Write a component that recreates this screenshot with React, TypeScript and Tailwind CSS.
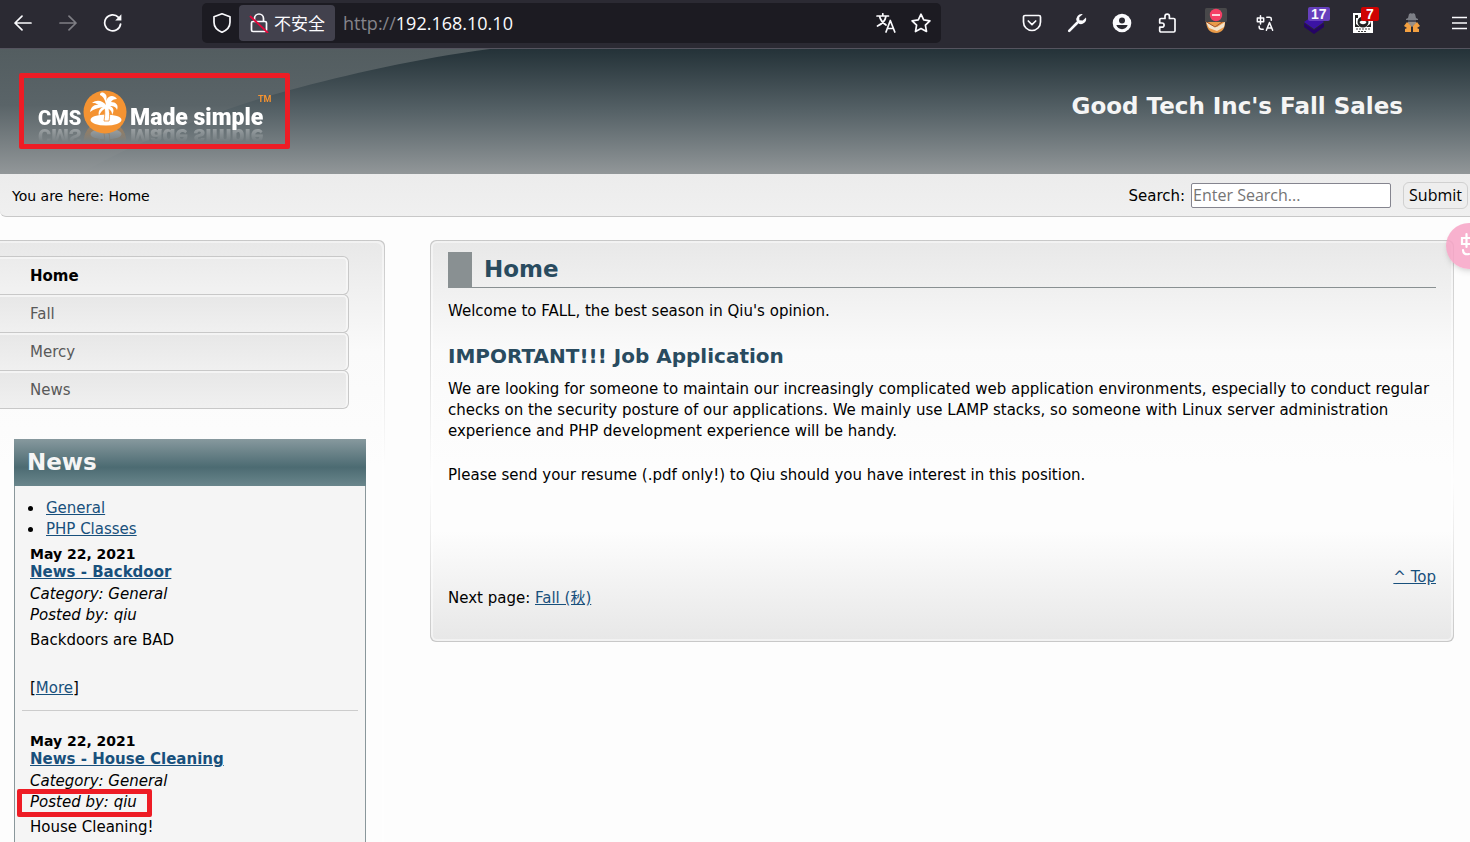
import React from "react";

const link = "text-[#18507c] underline";

function Glyph({ children, size = 20, className = "" }: { children: React.ReactNode; size?: number; className?: string }) {
  return (
    <svg width={size} height={size} viewBox="0 0 20 20" fill="none" stroke="#fbfbfe" strokeWidth="1.7" strokeLinecap="round" strokeLinejoin="round" className={"shrink-0 " + className} aria-hidden="true">
      {children}
    </svg>
  );
}

function Tool({ label, children }: { label: string; children: React.ReactNode }) {
  return (
    <button aria-label={label} className="relative flex size-8 shrink-0 items-center justify-center">
      {children}
    </button>
  );
}

function Toolbar() {
  return (
    <header className="flex h-[49px] shrink-0 items-center border-b border-[#55545f] bg-[#2b2a33] pb-0.5 text-[#fbfbfe]">
      <div className="flex gap-[13px] pl-[7px]">
        <Tool label="Back"><Glyph><path d="M18 10H2M9 3.200 2 10l7 6.800" /></Glyph></Tool>
        <Tool label="Forward"><Glyph className="opacity-40"><path d="M2 10h16M11 3.200 18 10l-7 6.800" /></Glyph></Tool>
        <Tool label="Reload">
          <Glyph>
            <path d="M17.600 11a8 8 0 1 1-2.100-6.700" />
            <path d="M18.400 1.300v6.200h-6.200z" fill="#fbfbfe" stroke="none" />
          </Glyph>
        </Tool>
      </div>
      <div className="ml-[73px] flex h-10 w-[739px] items-center rounded-[5px] bg-[#1c1b22] pr-1 pl-1">
        <Tool label="Tracking protection">
          <Glyph><path d="M10 .8 18 3.700v5.600c0 4.400-3.200 8-8 10-4.800-2-8-5.600-8-10V3.700z" /></Glyph>
        </Tool>
        <button className="ml-px flex h-9 items-center gap-[5px] rounded bg-[#42414d] pr-[10px] pl-[10px] font-['Noto_Sans_CJK_SC',sans-serif] text-[17px]">
          <Glyph>
            <path d="M5.500 8.500V5.500a4.500 4.500 0 0 1 9 0v3M4 8.500h12a1.500 1.500 0 0 1 1.500 1.500v7a1.500 1.500 0 0 1-1.500 1.500H4A1.500 1.500 0 0 1 2.500 17v-7A1.500 1.500 0 0 1 4 8.500z" />
            <path d="M1.500 3.500 18.500 19.500" stroke="#e5063a" strokeWidth="1.800" />
          </Glyph>
          <span>不安全</span>
        </button>
        <span className="ml-2 font-['Open_Sans','Noto_Sans',sans-serif] text-[18px]">
          <span className="text-[#85848b]">http://</span>192.168.10.10
        </span>
        <div className="ml-auto flex gap-[3px]">
          <Tool label="Translate">
            <Glyph>
              <path d="M1 3h11.500M6.800 .8V3M10 3c-.6 4-4 8-8.500 10M3.500 3c.8 4 3.500 7 6.500 9M10 19l4.300-11.500L18.800 19M11.600 15.500h5.600" />
            </Glyph>
          </Tool>
          <Tool label="Bookmark">
            <Glyph><path d="m10 1.200 2.700 5.700 6.200.9-4.500 4.400 1.100 6.300L10 15.500l-5.500 3 1.100-6.300L1.100 7.800l6.200-.9z" /></Glyph>
          </Tool>
        </div>
      </div>
      <div className="ml-auto flex items-center">
        <div className="flex gap-[13px]">
          <Tool label="Save to Pocket">
            <Glyph>
              <path d="M3 2.500h14A1.500 1.500 0 0 1 18.500 4v5a8.500 8.500 0 0 1-17 0V4A1.500 1.500 0 0 1 3 2.500zM6.300 8l3.700 3.600L13.700 8" />
            </Glyph>
          </Tool>
          <Tool label="Tools">
            <Glyph>
              <path d="M2.200 17.800 10 10" strokeWidth="2.600" />
              <path d="M15.800 1.200a5.300 5.300 0 0 0-6 7.300l2 2.200a5.300 5.300 0 0 0 7.200-6.200l-3.300 3.100-3.300-.300-.1-3z" fill="#fbfbfe" stroke="none" />
            </Glyph>
          </Tool>
          <Tool label="Account">
            <Glyph>
              <circle cx="10" cy="10" r="9.300" fill="#fbfbfe" stroke="none" />
              <circle cx="10" cy="7.400" r="3" fill="#2b2a33" stroke="none" />
              <path d="M4.300 12h11.400a6 6 0 0 1-11.400 0z" fill="#2b2a33" stroke="none" />
            </Glyph>
          </Tool>
          <Tool label="Extensions">
            <Glyph>
              <path d="M4 5.500h4V3.300a2.200 2.200 0 0 1 4.400 0v2.200h4.300a1.300 1.300 0 0 1 1.300 1.300v10.900a1.300 1.300 0 0 1-1.300 1.300H4a1.300 1.300 0 0 1-1.300-1.300v-3.500H5a2.100 2.100 0 0 0 0-4.200H2.700V6.800A1.300 1.300 0 0 1 4 5.500z" />
            </Glyph>
          </Tool>
        </div>
        <div className="ml-[17px] flex gap-[17px]">
          <Tool label="Proxy">
            <svg width="24" height="28" viewBox="0 0 24 28" aria-hidden="true" className="-mt-1 shrink-0">
              <path d="M2 13c0 9 4 13 10 13s10-5 9-14z" fill="#e99a48" />
              <path d="m2 15 7 4 4 1 8-5-1 5-7 4-8-3z" fill="#f2e3cd" />
              <path d="m1 14 10 6 10-7" fill="none" stroke="#a3522b" />
              <rect x="1" y="1" width="22" height="14" rx="1.500" fill="#48484a" />
              <circle cx="12" cy="8" r="6.200" fill="#f43f66" />
              <path d="M8 8h8" stroke="#fbd5dd" strokeWidth="2" />
            </svg>
          </Tool>
          <Tool label="Translate page">
            <Glyph size={18}>
              <path d="M1.500 4.500h7v4h-7zM5 2v9M12 3.500h3a2 2 0 0 1 2 2V7M3.500 13.500v1a2.500 2.500 0 0 0 2.500 2.500h2M11.500 18 15 9.500l3.500 8.500M12.700 15.500h4.600" />
            </Glyph>
          </Tool>
          <Tool label="Layers">
            <svg width="22" height="22" viewBox="0 0 22 22" aria-hidden="true"><path d="m11 3 10 7-10 7L1 10z" fill="#3b13a4" /><path d="m1 11 10 7 10-7v4l-10 7-10-7z" fill="#250465" /></svg>
            <span className="absolute top-0 left-[10px] rounded-xs bg-[#6640bd] px-[3px] font-['Liberation_Sans',sans-serif] text-[14px] leading-[14px] font-bold">17</span>
          </Tool>
          <Tool label="User scripts">
            <svg width="20" height="22" viewBox="0 0 20 22" aria-hidden="true">
              <path d="M0 1h20v20H0z" fill="#fff" />
              <path d="M2 3h3v3H3v6l4 3H2zM18 9v6h-5l4-3z" fill="#222" />
              <circle cx="10" cy="10" r="5.500" fill="#222" />
              <path d="M6.500 10c2-2 5-2 7 0-1 3-6 3-7 0z" fill="#fff" />
              <path d="M3 17h14M5 19.500h9" stroke="#444" strokeDasharray="2 1" />
            </svg>
            <span className="absolute top-0 left-[14px] rounded-xs bg-[#cf0202] px-[5px] font-['Liberation_Sans',sans-serif] text-[14px] leading-[14px] font-bold">7</span>
          </Tool>
          <Tool label="Agent">
            <svg width="18" height="20" viewBox="0 0 18 20" aria-hidden="true">
              <path d="m5 5 1-4 2-1 1 1 1-1 2 1 1 4 2 1v1H3V6z" fill="#7d7f86" />
              <path d="M5 7h8v4l-4 3-4-3z" fill="#9a8f86" /><path d="M5 7h8v2H5z" fill="#4b4b55" />
              <path d="m4 9 4 4v6H2v-3l2-1-3-2zM14 9l-4 4v6h6v-3l-2-1 3-2z" fill="#f4a041" />
            </svg>
          </Tool>
        </div>
        <button aria-label="Menu" className="ml-[22px] flex w-5 shrink-0 items-center">
          <svg width="20" height="20" viewBox="0 0 20 20" stroke="#fbfbfe" strokeWidth="1.500" aria-hidden="true"><path d="M2 4.500h15M2 10h15M2 15.500h15" /></svg>
        </button>
      </div>
    </header>
  );
}

function Logo() {
  return (
    <a href="#home" aria-label="CMS Made Simple" className="relative ml-[38px] block h-12 w-[236px] font-['Roboto','Liberation_Sans',sans-serif] [-webkit-box-reflect:below_-18px_linear-gradient(transparent_50%,rgba(255,255,255,0.35)_80%)]">
      <svg width="236" height="48" viewBox="0 0 236 48" aria-hidden="true">
        <text x="0" y="37" fontSize="20" fontWeight="900" fill="#fff">CMS</text>
        <circle cx="67" cy="24" r="21.500" fill="#f49332" />
        <ellipse cx="68" cy="32" rx="15.500" ry="5.500" fill="#fff" />
        <path d="M66 33c1-6 1-10 0-15l4 0c2 5 2 10 1 15z" fill="#fff" stroke="#f49332" strokeWidth=".8" />
        <path d="M68 17c-3-4-9-6-14-2 4 0 5 1 7 2-5-1-8 2-9 7 4-3 8-4 13-5-4 2-5 5-4 9 2-5 5-7 7-8 4 1 6 3 6 7 3-5 1-8-2-9 4 0 6 1 7 4 2-5-1-8-6-8 1-2 3-3 6-3-4-5-9-3-11 2 1-4 1-6-2-8-3-1-4 0-4 2 4 2 5 5 6 10z" fill="#fff" />
        <text x="92" y="37" fontSize="23" fontWeight="900" fill="#fff">Made simple</text>
        <text x="220" y="14" fontSize="9" fontWeight="700" fill="#f49332">TM</text>
      </svg>
    </a>
  );
}

function Banner() {
  return (
    <div className="relative flex h-[125px] items-center justify-between bg-linear-to-b from-[#243238] via-[#566267] to-[#929799]">
      <svg className="absolute inset-0 h-full w-[490px]" viewBox="0 0 490 125" preserveAspectRatio="none" aria-hidden="true">
        <defs>
          <linearGradient id="swoosh" x1="0" y1="0" x2="0" y2="1">
            <stop offset="0" stopColor="#535d60" /><stop offset=".45" stopColor="#5a6468" /><stop offset="1" stopColor="#929799" />
          </linearGradient>
        </defs>
        <path d="M0 0H490C420 9 345 26 290 41 220 60 130 95 80 125H0z" fill="url(#swoosh)" />
      </svg>
      <Logo />
      <div className="absolute top-6 left-[19px] h-[76px] w-[271px] rounded-xs border-[5px] border-[#ee1c25]" />
      <p className="mr-[67px] pb-2.5 text-[23px] font-bold text-[#f5f5f5]">Good Tech Inc's Fall Sales</p>
    </div>
  );
}

function SearchBar() {
  return (
    <div className="flex h-[43px] items-center justify-between rounded-bl-md border-b border-[#c8c8c8] bg-linear-to-b from-[#ececec] to-[#f0f0f0] pr-0.5 pl-3">
      <p className="pt-[3px] text-[14px]">You are here: Home</p>
      <form className="flex items-center" onSubmit={(e) => e.preventDefault()}>
        <label htmlFor="search" className="mr-1.5 pt-[3px] text-[15px]">Search:</label>
        <input id="search" placeholder="Enter Search..." className="h-[25px] w-[200px] rounded-xs border border-[#85858f] bg-white px-px font-['Open_Sans','Noto_Sans',sans-serif] text-[16px] placeholder:text-[#757575]" />
        <button className="ml-3 h-[27px] rounded-md border border-[#d0d0d0] bg-[#eeeeee] px-[5px] font-['Open_Sans','Noto_Sans',sans-serif] text-[16px] leading-6">Submit</button>
      </form>
    </div>
  );
}

type Story = { title: string; body: string; marked?: boolean };
const stories: Story[] = [
  { title: "News - Backdoor", body: "Backdoors are BAD" },
  { title: "News - House Cleaning", body: "House Cleaning!", marked: true },
];

function NewsStory({ title, body, marked }: Story) {
  return (
    <article className="mx-[7px] mb-[21px] border-b border-[#cccccc] px-2 pb-[11px]">
      <p className="text-[14px] leading-[18px] font-bold">May 22, 2021</p>
      <h3 className="text-[15px] leading-[19px] font-bold"><a href="#story" className={link}>{title}</a></h3>
      <p className="pt-0.5 italic">Category: General</p>
      <p className="relative italic">
        Posted by: qiu
        {marked && <span className="absolute -top-[3px] -left-[13px] h-7 w-[135px] rounded-xs border-[5px] border-[#ee1c25]" />}
      </p>
      <p className="pt-1">{body}</p>
      <p className="pt-[27px]">[<a href="#more" className={link}>More</a>]</p>
    </article>
  );
}

function Sidebar() {
  return (
    <aside className="w-[385px] shrink-0">
      <div className="rounded-tr-md bg-linear-to-b from-[#c8c8c8] to-transparent to-[225px] pt-px pr-px">
        <div className="rounded-tr-md bg-linear-to-b from-[#e8e8e8] via-[#fafafa] via-[110px] to-[#fdfdfd] to-[225px] pt-[15px] shadow-[inset_-2px_2px_0_rgba(255,255,255,0.45)]">
          <nav className="mr-[35px] mb-[31px]">
            {["Home", "Fall", "Mercy", "News"].map((name, i) => (
              <a key={name} href={"#" + name.toLowerCase()} className={"-mb-px block h-[39px] rounded-r-md border border-l-0 border-[#c8c8c8] bg-linear-to-b pl-[30px] text-[15px] leading-[39px] shadow-[inset_-2px_0_0_#f6f6f6,inset_0_2px_0_#f4f4f4] " + (i === 0 ? "from-[#ebebeb] to-[#f2f2f2] font-bold text-black" : "from-[#e7e7e7] to-[#f0f0f0] text-[#595959]")}>
                {name}
              </a>
            ))}
          </nav>
          <section className="mr-[18px] ml-[14px] border-x border-[#8a979b] bg-[#f5f5f5] text-[15px] leading-[21px]">
            <h2 className="-mx-px h-[47px] bg-linear-to-b from-[#87999e] via-[#4c6b72] via-60% to-[#6a868c] pl-[13px] text-[23px] leading-[47px] font-bold text-[#f5f5f5]">News</h2>
            <ul className="list-disc pt-3 pb-[5px] pl-[29px]">
              <li className="pl-0.5"><a href="#general" className={link}>General</a></li>
              <li className="pl-0.5"><a href="#php" className={link}>PHP Classes</a></li>
            </ul>
            {stories.map((s) => <NewsStory key={s.title} {...s} />)}
          </section>
        </div>
      </div>
    </aside>
  );
}

function Article() {
  return (
    <main className="mr-4 min-w-0 flex-1 self-start rounded-md bg-linear-to-b from-[#c8c8c8] via-[#fdfdfd] via-60% to-[#c8c8c8] p-px">
      <div className="rounded-md bg-[linear-gradient(to_bottom,#e8e8e8,#fafafa_110px,#fdfdfd_225px,#fdfdfd_290px,#e7e7e7)] px-[17px] pt-[11px] pb-8 text-[15px] leading-[21px] shadow-[inset_0_0_0_2px_rgba(255,255,255,0.45)]">
        <h1 className="h-9 border-b border-[#899092] text-[23px] leading-[35px] font-bold text-[#294b5f]">
          <span className="block h-[35px] border-l-24 border-[#899092] pl-3">Home</span>
        </h1>
        <p className="mt-[13px]">Welcome to FALL, the best season in Qiu's opinion.</p>
        <h2 className="mt-[22px] text-[20px] leading-6 font-bold text-[#294b5f]">IMPORTANT!!! Job Application</h2>
        <p className="mt-[11px]">
          We are looking for someone to maintain our increasingly complicated web application environments, especially to conduct regular checks on the security posture of our applications. We mainly use LAMP stacks, so someone with Linux server administration experience and PHP development experience will be handy.
        </p>
        <p className="mt-[23px]">Please send your resume (.pdf only!) to Qiu should you have interest in this position.</p>
        <p className="mt-[81px] text-right"><a href="#top" className={link}>^ Top</a></p>
        <p>Next page: <a href="#fall" className={link}>Fall (秋)</a></p>
      </div>
    </main>
  );
}

export default function App() {
  return (
    <div className="relative flex h-screen flex-col overflow-hidden bg-[#fdfdfd] font-['DejaVu_Sans','Noto_Sans_CJK_SC',sans-serif] text-black">
      <Toolbar />
      <div className="min-h-0 flex-1 overflow-y-auto [scrollbar-width:none]">
        <Banner />
        <SearchBar />
        <div className="flex gap-[45px] pt-[23px]">
          <Sidebar />
          <Article />
        </div>
      </div>
      <button aria-label="Translate selection" className="absolute top-[223px] -right-[22px] size-[46px] rounded-full bg-[#f7a3c6]/85 shadow-md">
        <svg width="46" height="46" viewBox="0 0 46 46" fill="none" stroke="#fff" strokeWidth="2.200" strokeLinecap="round" aria-hidden="true">
          <path d="M16 15h10v6H16zM20.500 11v13M17 27c0 3 2 5 6 4" />
        </svg>
      </button>
    </div>
  );
}
